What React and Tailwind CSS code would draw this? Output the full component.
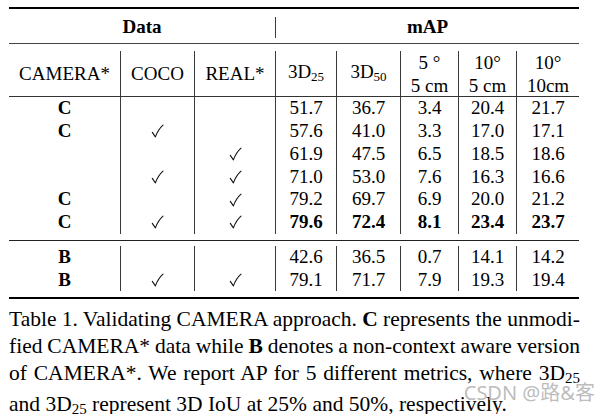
import React from "react";

const W = ["w-[111px]", "w-[74px]", "w-[81px]", "w-[61px]", "w-[64px]", "w-[58px]", "w-[58px]", "w-[63px]"];

const cRows = [
  ["C", "", "", "51.7", "36.7", "3.4", "20.4", "21.7"],
  ["C", "v", "", "57.6", "41.0", "3.3", "17.0", "17.1"],
  ["", "", "v", "61.9", "47.5", "6.5", "18.5", "18.6"],
  ["", "v", "v", "71.0", "53.0", "7.6", "16.3", "16.6"],
  ["C", "", "v", "79.2", "69.7", "6.9", "20.0", "21.2"],
  ["C", "v", "v", "79.6", "72.4", "8.1", "23.4", "23.7"],
];

const bRows = [
  ["B", "", "", "42.6", "36.5", "0.7", "14.1", "14.2"],
  ["B", "v", "v", "79.1", "71.7", "7.9", "19.3", "19.4"],
];

function Check() {
  return (
    <svg width="13" height="14" viewBox="0 0 13 14" className="block">
      <path d="M1.3 8.4 L4.4 12.9 C6 8.6 8.4 4.4 12 1.2" fill="none" stroke="#111" strokeWidth="1.1" strokeLinecap="round" strokeLinejoin="round" />
    </svg>
  );
}

function Sub({ children, size = "text-[13px]" }) {
  return <span className={`${size} align-[-3px]`}>{children}</span>;
}

function Row({ cells, bold, h }) {
  return (
    <div className={`flex ${h}`}>
      {cells.map((c, i) => (
        <div
          key={i}
          className={`${W[i]} flex items-center justify-center ${i > 0 ? "border-l border-[#3a3a3a]" : ""} ${bold || i === 0 ? "font-bold" : ""}`}
        >
          {c === "v" ? <Check /> : c}
        </div>
      ))}
    </div>
  );
}

export default function App() {
  const head = [
    "CAMERA*",
    "COCO",
    "REAL*",
    <span>3D<Sub>25</Sub></span>,
    <span>3D<Sub>50</Sub></span>,
    <span className="text-center">5 °<br />5 cm</span>,
    <span className="text-center">10°<br />5 cm</span>,
    <span className="text-center">10°<br />10cm</span>,
  ];

  return (
    <div className="relative w-[606px] h-[414px] overflow-hidden bg-white text-black font-['Liberation_Serif','Times_New_Roman',serif]">
      <div className="pl-[9px] pt-[7px]">
        {/* table */}
        <div className="w-[570px] text-[19px]">
          <div className="h-[2px] bg-black" />
          <div className="flex pt-[8px] pb-[5px]">
            <div className="w-[266px] h-[21px] flex items-center justify-center font-bold">Data</div>
            <div className="flex-1 h-[21px] flex items-center justify-center font-bold border-l border-[#3a3a3a]">mAP</div>
          </div>
          <div className="h-px bg-[#444]" />
          <div className="pt-[7px]">
            <div className="flex h-[45px] leading-[23px]">
              {head.map((c, i) => (
                <div key={i} className={`${W[i]} flex items-center justify-center ${i > 0 ? "border-l border-[#3a3a3a]" : ""}`}>
                  {c}
                </div>
              ))}
            </div>
            <div className="h-px bg-[#333]" />
            {cRows.map((r, i) => (
              <Row key={i} cells={r} bold={i === 5} h="h-[22.8px]" />
            ))}
          </div>
          <div className="h-px bg-[#222] mt-[6px]" />
          <div className="pt-[5px] pb-[6px]">
            {bRows.map((r, i) => (
              <Row key={i} cells={r} h="h-[22.7px]" />
            ))}
          </div>
          <div className="h-[2px] bg-black" />
        </div>

        {/* caption */}
        <div className="w-[571px] mt-[7px] text-[21.5px] leading-[26.7px]">
          <div className="text-justify [text-align-last:justify] [word-spacing:-1.5px]">
            Table 1. Validating CAMERA approach. <b>C</b> represents the unmodi-
          </div>
          <div className="text-justify [text-align-last:justify] [word-spacing:-1.5px]">
            fied CAMERA* data while <b>B</b> denotes a non-context aware version
          </div>
          <div className="text-justify [text-align-last:justify] [word-spacing:-1.5px]">
            of CAMERA*. We report AP for 5 different metrics, where 3D<Sub size="text-[15px]">25</Sub>
          </div>
          <div>
            and 3D<Sub size="text-[15px]">25</Sub> represent 3D IoU at 25% and 50%, respectively.
          </div>
        </div>
      </div>

      <div className="absolute right-[11px] top-[381px] text-[20px] leading-[24px] text-[#b4b4b4]/90 font-['Noto_Sans','Noto_Sans_CJK_SC',sans-serif]">
        CSDN @路&amp;客
      </div>
    </div>
  );
}
